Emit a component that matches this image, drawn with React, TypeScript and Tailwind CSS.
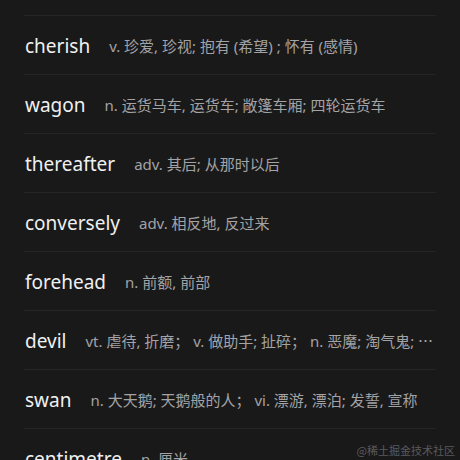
import React from "react";

const rows: [string, string][] = [
  ["cherish", "v. 珍爱, 珍视; 抱有 (希望) ; 怀有 (感情)"],
  ["wagon", "n. 运货马车, 运货车; 敞篷车厢; 四轮运货车"],
  ["thereafter", "adv. 其后; 从那时以后"],
  ["conversely", "adv. 相反地, 反过来"],
  ["forehead", "n. 前额, 前部"],
  ["devil", "vt. 虐待, 折磨； v. 做助手; 扯碎； n. 恶魔; 淘气鬼; ⋯"],
  ["swan", "n. 大天鹅; 天鹅般的人； vi. 漂游, 漂泊; 发誓, 宣称"],
  ["centimetre", "n. 厘米"],
];

export default function App() {
  return (
    <div className="relative w-[460px] h-[460px] overflow-hidden bg-[#19191a]">
      <div className="pt-[15px] px-[24px] w-[460px]">
        {rows.map(([w, d]) => (
          <div key={w} className="border-t border-[#252526] h-[59px] flex items-center pt-[3px] pl-[1px]">
            <span className="text-[19px] text-[#f0f0f0] whitespace-nowrap shrink-0" style={{ fontFamily: "'Noto Sans', sans-serif" }}>
              {w}
            </span>
            <span
              className="ml-[19px] text-[15px] text-[#a3a3a6] whitespace-nowrap overflow-hidden min-w-0"
              style={{ fontFamily: "'Noto Sans', 'Noto Sans CJK SC', sans-serif" }}
            >
              {d}
            </span>
          </div>
        ))}
      </div>
      <div
        className="absolute right-[5px] bottom-[2px] text-[11px] text-[#5a5a5c]"
        style={{ fontFamily: "'Noto Sans CJK SC', sans-serif" }}
      >
        @稀土掘金技术社区
      </div>
    </div>
  );
}
